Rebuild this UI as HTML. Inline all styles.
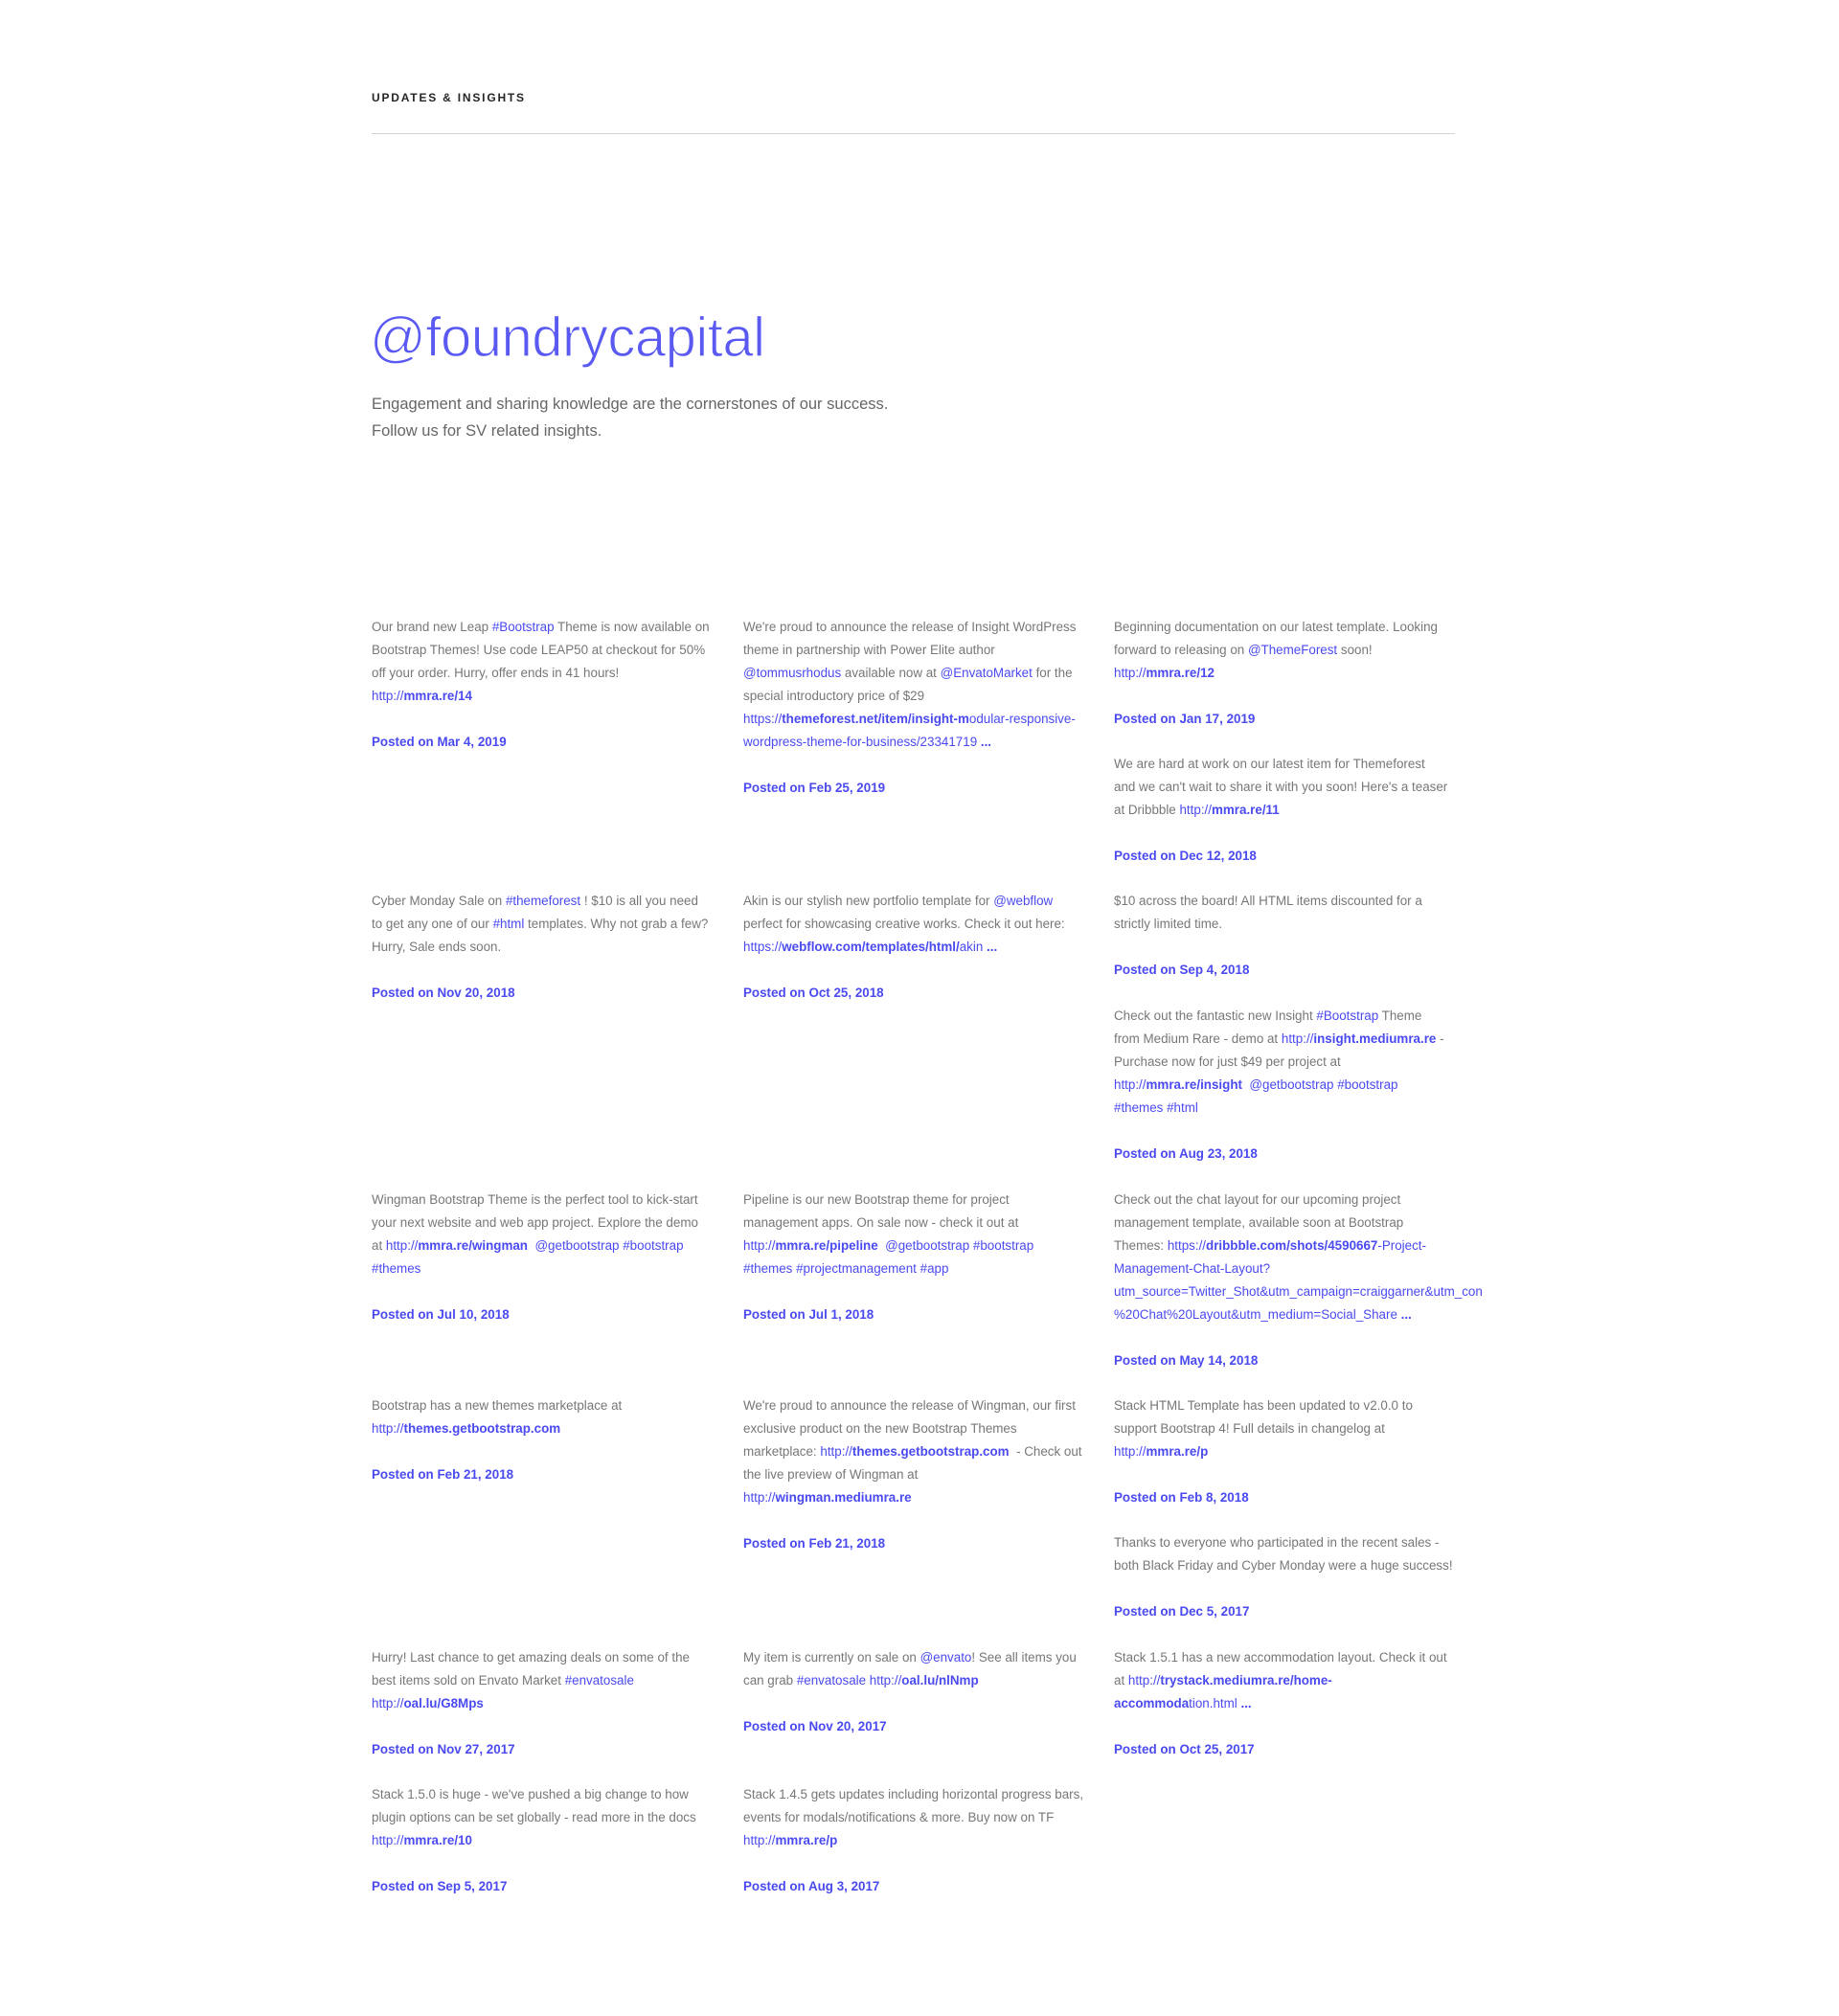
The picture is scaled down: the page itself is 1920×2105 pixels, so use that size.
<!DOCTYPE html>
<html><head><meta charset="utf-8">
<style>
*{margin:0;padding:0;box-sizing:border-box}
body{width:1920px;height:2105px;background:#fff;position:relative;font-family:"Liberation Sans",sans-serif;overflow:hidden}
.hd{position:absolute;left:388px;top:95px;font-size:12px;font-weight:bold;letter-spacing:1.8px;color:#252525}
.hr{position:absolute;left:388px;top:139px;width:1131px;height:1px;background:#d2d2d2}
.title{position:absolute;left:386px;top:318px;font-size:58px;line-height:70px;color:#5a5af2;font-weight:normal;letter-spacing:-0.5px;-webkit-text-stroke:1.2px #fff;paint-order:normal}
.lead{position:absolute;left:388px;top:408px;font-size:16.5px;line-height:28px;color:#666}
.p{position:absolute;width:420px;font-size:13.4px;line-height:24px;color:#777;white-space:nowrap}
.p a{color:#4a4af0;text-decoration:none}
.p b{font-weight:bold;color:#4a4af0}
.p .d{display:block;margin-top:24px;color:#4a4af0;font-weight:bold}
.c1{left:388px}.c2{left:776px}.c3{left:1163px}
</style></head><body>
<div class="hd">UPDATES &amp; INSIGHTS</div>
<div class="hr"></div>
<div class="title">@foundrycapital</div>
<div class="lead">Engagement and sharing knowledge are the cornerstones of our success.<br>Follow us for SV related insights.</div>

<div class="p c1" style="top:643px">Our brand new Leap <a>#Bootstrap</a> Theme is now available on<br>Bootstrap Themes! Use code LEAP50 at checkout for 50%<br>off your order. Hurry, offer ends in 41 hours!<br><a>http://<b>mmra.re/14</b></a><span class="d">Posted on Mar 4, 2019</span></div>
<div class="p c2" style="top:643px">We're proud to announce the release of Insight WordPress<br>theme in partnership with Power Elite author<br><a>@tommusrhodus</a> available now at <a>@EnvatoMarket</a> for the<br>special introductory price of $29<br><a>https://<b>themeforest.net/item/insight-m</b>odular-responsive-</a><br><a>wordpress-theme-for-business/23341719 <b>...</b></a><span class="d">Posted on Feb 25, 2019</span></div>
<div class="p c3" style="top:643px">Beginning documentation on our latest template. Looking<br>forward to releasing on <a>@ThemeForest</a> soon!<br><a>http://<b>mmra.re/12</b></a><span class="d">Posted on Jan 17, 2019</span></div>
<div class="p c3" style="top:786px">We are hard at work on our latest item for Themeforest<br>and we can't wait to share it with you soon! Here's a teaser<br>at Dribbble <a>http://<b>mmra.re/11</b></a><span class="d">Posted on Dec 12, 2018</span></div>

<div class="p c1" style="top:929px">Cyber Monday Sale on <a>#themeforest</a> ! $10 is all you need<br>to get any one of our <a>#html</a> templates. Why not grab a few?<br>Hurry, Sale ends soon.<span class="d">Posted on Nov 20, 2018</span></div>
<div class="p c2" style="top:929px">Akin is our stylish new portfolio template for <a>@webflow</a><br>perfect for showcasing creative works. Check it out here:<br><a>https://<b>webflow.com/templates/html/</b>akin <b>...</b></a><span class="d">Posted on Oct 25, 2018</span></div>
<div class="p c3" style="top:929px">$10 across the board! All HTML items discounted for a<br>strictly limited time.<span class="d">Posted on Sep 4, 2018</span></div>
<div class="p c3" style="top:1049px">Check out the fantastic new Insight <a>#Bootstrap</a> Theme<br>from Medium Rare - demo at <a>http://<b>insight.mediumra.re</b></a> -<br>Purchase now for just $49 per project at<br><a>http://<b>mmra.re/insight</b></a> &nbsp;<a>@getbootstrap</a> <a>#bootstrap</a><br><a>#themes</a> <a>#html</a><span class="d">Posted on Aug 23, 2018</span></div>

<div class="p c1" style="top:1241px">Wingman Bootstrap Theme is the perfect tool to kick-start<br>your next website and web app project. Explore the demo<br>at <a>http://<b>mmra.re/wingman</b></a> &nbsp;<a>@getbootstrap</a> <a>#bootstrap</a><br><a>#themes</a><span class="d">Posted on Jul 10, 2018</span></div>
<div class="p c2" style="top:1241px">Pipeline is our new Bootstrap theme for project<br>management apps. On sale now - check it out at<br><a>http://<b>mmra.re/pipeline</b></a> &nbsp;<a>@getbootstrap</a> <a>#bootstrap</a><br><a>#themes</a> <a>#projectmanagement</a> <a>#app</a><span class="d">Posted on Jul 1, 2018</span></div>
<div class="p c3" style="top:1241px;width:385px;overflow:hidden">Check out the chat layout for our upcoming project<br>management template, available soon at Bootstrap<br>Themes: <a>https://<b>dribbble.com/shots/4590667</b>-Project-</a><br><a>Management-Chat-Layout?</a><br><a>utm_source=Twitter_Shot&amp;utm_campaign=craiggarner&amp;utm_content=Chat</a><br><a>%20Chat%20Layout&amp;utm_medium=Social_Share <b>...</b></a><span class="d">Posted on May 14, 2018</span></div>

<div class="p c1" style="top:1456px">Bootstrap has a new themes marketplace at<br><a>http://<b>themes.getbootstrap.com</b></a><span class="d">Posted on Feb 21, 2018</span></div>
<div class="p c2" style="top:1456px">We're proud to announce the release of Wingman, our first<br>exclusive product on the new Bootstrap Themes<br>marketplace: <a>http://<b>themes.getbootstrap.com</b></a> &nbsp;- Check out<br>the live preview of Wingman at<br><a>http://<b>wingman.mediumra.re</b></a><span class="d">Posted on Feb 21, 2018</span></div>
<div class="p c3" style="top:1456px">Stack HTML Template has been updated to v2.0.0 to<br>support Bootstrap 4! Full details in changelog at<br><a>http://<b>mmra.re/p</b></a><span class="d">Posted on Feb 8, 2018</span></div>
<div class="p c3" style="top:1599px">Thanks to everyone who participated in the recent sales -<br>both Black Friday and Cyber Monday were a huge success!<span class="d">Posted on Dec 5, 2017</span></div>

<div class="p c1" style="top:1719px">Hurry! Last chance to get amazing deals on some of the<br>best items sold on Envato Market <a>#envatosale</a><br><a>http://<b>oal.lu/G8Mps</b></a><span class="d">Posted on Nov 27, 2017</span></div>
<div class="p c2" style="top:1719px">My item is currently on sale on <a>@envato</a>! See all items you<br>can grab <a>#envatosale</a> <a>http://<b>oal.lu/nlNmp</b></a><span class="d">Posted on Nov 20, 2017</span></div>
<div class="p c3" style="top:1719px">Stack 1.5.1 has a new accommodation layout. Check it out<br>at <a>http://<b>trystack.mediumra.re/home-</b></a><br><a><b>accommoda</b>tion.html <b>...</b></a><span class="d">Posted on Oct 25, 2017</span></div>

<div class="p c1" style="top:1862px">Stack 1.5.0 is huge - we've pushed a big change to how<br>plugin options can be set globally - read more in the docs<br><a>http://<b>mmra.re/10</b></a><span class="d">Posted on Sep 5, 2017</span></div>
<div class="p c2" style="top:1862px">Stack 1.4.5 gets updates including horizontal progress bars,<br>events for modals/notifications &amp; more. Buy now on TF<br><a>http://<b>mmra.re/p</b></a><span class="d">Posted on Aug 3, 2017</span></div>
</body></html>
